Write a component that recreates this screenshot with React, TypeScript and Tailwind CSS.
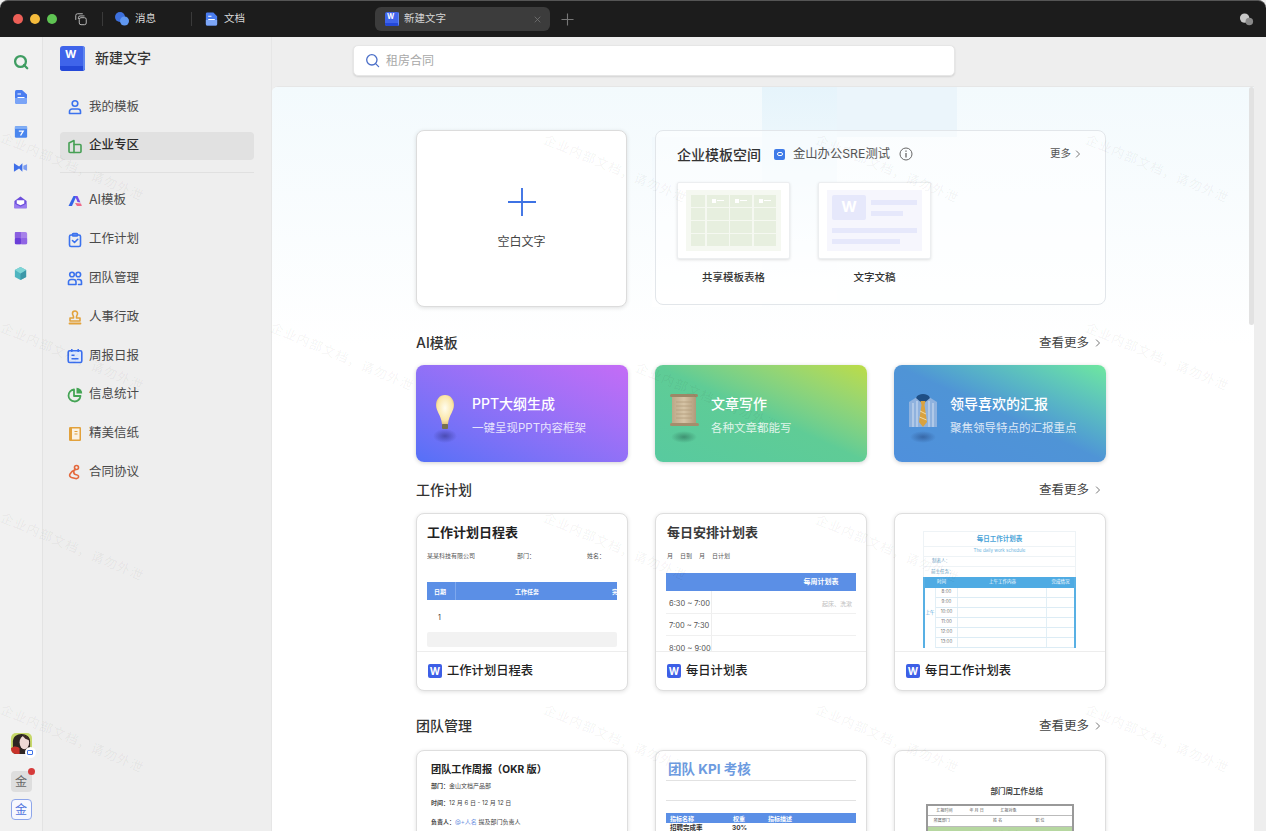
import React from "react";

const FONT = "font-['Inter','Noto_Sans_CJK_SC','Noto_Sans',sans-serif]";

function WordIcon({ box, text }: { box: string; text: string }) {
  return (
    <div className={`${box} relative overflow-hidden bg-[#3f64ea] text-white font-bold flex items-start justify-start`}>
      <span className={text}>W</span>
      <div className="absolute bottom-0 left-0 right-0 h-[18%] bg-[#2448d8]" />
      <div className="absolute top-0 bottom-0 right-0 w-[8%] bg-[#5f86ef]" />
    </div>
  );
}

function FooterWord() {
  return (
    <div className="w-[14px] h-[14px] rounded-[2px] bg-[#3d5fe6] text-white flex items-center justify-center text-[10px] font-bold leading-none shrink-0">W</div>
  );
}

const railIcons = [
  <svg key="s" viewBox="0 0 16 16" className="w-[16px] h-[16px]"><circle cx="7.5" cy="7.5" r="5.4" fill="none" stroke="#3f9d62" strokeWidth="2.3" /><path d="M11 11l3.2 3.2" stroke="#3f9d62" strokeWidth="2.3" strokeLinecap="round" /></svg>,
  <svg key="d" viewBox="0 0 16 16" className="w-[16px] h-[16px]"><path d="M2 2.5A1.5 1.5 0 0 1 3.5 1H9l5 4.5V13a2 2 0 0 1-2 2H4a2 2 0 0 1-2-2z" fill="#4a7df0" /><path d="M2 9h12v4a2 2 0 0 1-2 2H4a2 2 0 0 1-2-2z" fill="#7aa4f7" /><path d="M4.5 5h3.500M4.500 8.500h7" stroke="#fff" strokeWidth="1.2" /></svg>,
  <svg key="c" viewBox="0 0 16 16" className="w-[14px] h-[14px]"><rect x="1" y="1.5" width="14" height="13" rx="1.5" fill="#4a86ee" /><rect x="1" y="1.5" width="14" height="3" fill="#82aef5" /><path d="M5.5 7h5l-3 5" fill="none" stroke="#fff" strokeWidth="1.5" /></svg>,
  <svg key="v" viewBox="0 0 16 16" className="w-[15px] h-[15px]"><path d="M1 3.5l5.5 3.500L10 3.500v9L6.500 9 1 12.500z" fill="#3f6fe8" /><path d="M11 6.200L15 4.500v7l-4-1.700z" fill="#7d9df0" /></svg>,
  <svg key="m" viewBox="0 0 16 16" className="w-[15px] h-[15px]"><path d="M1.500 6.500L8 1.500l6.500 5V14H1.500z" fill="#6d4fdc" /><path d="M4 5.500h8v3.500L8 11 4 9z" fill="#fff" /><path d="M1.500 9L8 12.500 14.500 9v5h-13z" fill="#9a7df0" /></svg>,
  <svg key="q" viewBox="0 0 16 16" className="w-[14px] h-[14px]"><rect x="1" y="1" width="14" height="14" rx="2" fill="#a782ea" /><rect x="1" y="1" width="7" height="7" rx="1" fill="#8a5fe0" /><rect x="1" y="8" width="7" height="7" rx="1" fill="#6b3fd8" /><rect x="8" y="8" width="7" height="7" rx="1" fill="#9065e4" /></svg>,
  <svg key="b" viewBox="0 0 16 16" className="w-[15px] h-[15px]"><path d="M8 1l6 3.300v7.400L8 15l-6-3.300V4.300z" fill="#4fb5c0" /><path d="M8 8l6-3.700v7.400L8 15z" fill="#3b97a8" /><path d="M8 1l6 3.300L8 8 2 4.300z" fill="#7fd5d6" /></svg>,
];

const Stroke = ({ c, children }: { c: string; children: React.ReactNode }) => (
  <svg viewBox="0 0 16 16" className="w-[16px] h-[16px]" fill="none" stroke={c} strokeWidth="1.600" strokeLinecap="round" strokeLinejoin="round">{children}</svg>
);

const navTop = [
  { t: "我的模板", i: <Stroke c="#3b72ee"><circle cx="8" cy="4.500" r="2.800" /><path d="M2.500 14.500v-2a2.500 2.500 0 0 1 2.500-2.500h6a2.500 2.500 0 0 1 2.500 2.500v2z" /></Stroke> },
  { t: "企业专区", i: <Stroke c="#47a055"><path d="M2 5l5-2.500v12H3a1 1 0 0 1-1-1z" /><path d="M7 6.500h6a1 1 0 0 1 1 1v6a1 1 0 0 1-1 1H7" /></Stroke>, active: true },
];
const navRest = [
  { t: "AI模板", i: <svg viewBox="0 0 16 16" className="w-[16px] h-[16px]"><path d="M1.500 13L6.500 3h3L5 13z" fill="#3564e8" /><path d="M8 3h2.500l3 6.500-3-.5z" fill="#7a4ae8" /><path d="M8 10l6 .5.800 2.500H10z" fill="#ef6a8a" /></svg> },
  { t: "工作计划", i: <Stroke c="#3b72ee"><rect x="2.500" y="3" width="11" height="11.500" rx="1.500" /><rect x="5.500" y="1.500" width="5" height="2.500" rx=".8" /><path d="M5.500 8.500l2 2 3.200-3.200" /></Stroke> },
  { t: "团队管理", i: <Stroke c="#3b72ee"><circle cx="5" cy="4.500" r="2.300" /><circle cx="11.300" cy="4.500" r="2.300" /><path d="M1.500 14.500v-2.500a2.500 2.500 0 0 1 2.500-2.500h2.500a2.500 2.500 0 0 1 2.500 2.500v2.500z" /><path d="M10.500 9.500h1.500a2.500 2.500 0 0 1 2.500 2.500v2.500h-3" /></Stroke> },
  { t: "人事行政", i: <Stroke c="#e2a23c"><path d="M5.500 4.500a2.500 2.500 0 1 1 5 0c0 1.500-1 2-1 3.500v1h3.500v3H3V9h3.500V8c0-1.500-1-2-1-3.500z" /><path d="M2.500 14.500h11" strokeWidth="1.800" /></Stroke> },
  { t: "周报日报", i: <svg viewBox="0 0 16 16" className="w-[16px] h-[16px]"><rect x="1.200" y="2.800" width="13.600" height="11.700" rx="1.500" fill="#dfe8fc" stroke="#3b6fee" strokeWidth="1.600" /><path d="M4.800 1v3M11.200 1v3" stroke="#3b6fee" strokeWidth="1.500" /><path d="M4.500 7.200h3M4.500 10.800h7" stroke="#3b6fee" strokeWidth="1.400" /></svg> },
  { t: "信息统计", i: <svg viewBox="0 0 16 16" className="w-[16px] h-[16px]" fill="none"><path d="M7 2.500a6 6 0 1 0 6.500 6.500H7z" stroke="#45a455" strokeWidth="1.800" strokeLinejoin="round" /><path d="M9.500.8a5.500 5.500 0 0 1 5.700 5.700H9.500z" fill="#45a455" /></svg> },
  { t: "精美信纸", i: <svg viewBox="0 0 16 16" className="w-[16px] h-[16px]"><rect x="2" y="1" width="12" height="14" rx="1.200" fill="#e2a13b" /><rect x="5" y="2.500" width="7.500" height="11" fill="#fbf3e3" /><path d="M7.500 5.500h3M7.500 8h3" stroke="#e2a13b" strokeWidth="1.200" /></svg> },
  { t: "合同协议", i: <Stroke c="#e4683c"><circle cx="9.500" cy="3.500" r="2" /><path d="M8.500 5.500L5 7.500 3 10c-1 1.500 0 3 1.500 3.500l4 1c2 .5 3.500-1 3-2.500-.5-1.300-2-1.200-3-1.500-1.500-.5-2-1.500-1.500-3" /></Stroke> },
];

function NavItem({ t, i, active }: { t: string; i: React.ReactNode; active?: boolean }) {
  return (
    <div className="h-[38.800px] flex items-center">
      <div className={`h-[28px] w-full flex items-center pl-[6px] rounded-[4px] ${active ? "bg-[#e1e1e1] text-[#2b2b2b] font-medium" : "text-[#4a4a4a]"}`}>
        <div className="w-[17px] flex justify-center shrink-0">{i}</div>
        <span className="ml-[6px] text-[12.500px]">{t}</span>
      </div>
    </div>
  );
}

function Chevron() {
  return <svg viewBox="0 0 8 12" className="w-[6px] h-[10px]" fill="none" stroke="#666" strokeWidth="1.200"><path d="M1.500 1.500L6 6l-4.500 4.500" /></svg>;
}

function SectionHead({ title, mt }: { title: string; mt: string }) {
  return (
    <div className={`flex items-center justify-between h-[20px] ${mt}`}>
      <span className="text-[14px] font-medium text-[#333]">{title}</span>
      <span className="flex items-center gap-[6px] text-[12.500px] text-[#444] pr-[5px] pt-[2px]">查看更多 <Chevron /></span>
    </div>
  );
}

function GradCard({ cls, title, sub, art }: { cls: string; title: string; sub: string; art: React.ReactNode }) {
  return (
    <div className={`w-[212px] h-[97px] rounded-[8px] flex items-center pl-[2px] shadow-[0_1px_4px_rgba(0,0,0,0.18)] ${cls}`}>
      <div className="w-[54px] flex justify-center shrink-0">{art}</div>
      <div className="text-white mt-[2px]">
        <div className="text-[14px] font-medium leading-[20px]">{title}</div>
        <div className="text-[11.500px] opacity-80 mt-[6px] leading-[16px] whitespace-nowrap">{sub}</div>
      </div>
    </div>
  );
}

const Bulb = (
  <svg viewBox="0 0 24 52" className="w-[24px] h-[52px] mt-[10px]">
    <defs>
      <radialGradient id="bulb" cx="50%" cy="45%" r="60%"><stop offset="0" stopColor="#fffdf0" /><stop offset="0.7" stopColor="#fbe7a8" /><stop offset="1" stopColor="#d9b978" /></radialGradient>
      <radialGradient id="shade" cx="50%" cy="50%" r="50%"><stop offset="0" stopColor="rgba(20,20,80,0.4)" /><stop offset="1" stopColor="rgba(20,20,80,0)" /></radialGradient>
    </defs>
    <ellipse cx="12" cy="43" rx="12" ry="7" fill="url(#shade)" />
    <path d="M12 2c6 0 9 5 9 10 0 6-5 10-6 19H9C8 22 3 18 3 12 3 7 6 2 12 2z" fill="url(#bulb)" />
    <rect x="9" y="31" width="6" height="5" rx="1" fill="#77704f" />
  </svg>
);
const ScrollArt = (
  <svg viewBox="0 0 30 52" className="w-[30px] h-[52px] mt-[10px]">
    <defs>
      <linearGradient id="pap" x1="0" x2="1"><stop offset="0" stopColor="#bba888" /><stop offset="0.5" stopColor="#d6c4a6" /><stop offset="1" stopColor="#b09a7a" /></linearGradient>
      <radialGradient id="shade2" cx="50%" cy="50%" r="50%"><stop offset="0" stopColor="rgba(20,60,50,0.4)" /><stop offset="1" stopColor="rgba(20,60,50,0)" /></radialGradient>
    </defs>
    <ellipse cx="15" cy="44" rx="13" ry="6" fill="url(#shade2)" />
    <rect x="3" y="2" width="24" height="30" fill="url(#pap)" />
    <rect x="1" y="1" width="28" height="3" rx="1.500" fill="#9c8767" />
    <rect x="1" y="30" width="29" height="3" rx="1.500" fill="#a48e6c" />
    <path d="M7 9h16M7 13h16M7 17h16M7 21h16M7 25h16" stroke="#b39d7b" strokeWidth=".8" />
  </svg>
);
const Shirt = (
  <svg viewBox="0 0 30 52" className="w-[30px] h-[52px] mt-[10px]">
    <defs>
      <radialGradient id="shade3" cx="50%" cy="50%" r="50%"><stop offset="0" stopColor="rgba(20,40,90,0.4)" /><stop offset="1" stopColor="rgba(20,40,90,0)" /></radialGradient>
    </defs>
    <ellipse cx="15" cy="44" rx="13" ry="6" fill="url(#shade3)" />
    <path d="M1 9l8-5h12l8 5v25H1z" fill="#8fb2de" />
    <path d="M5 10v24M9 8v26M21 8v26M25 10v24" stroke="#c7d9ee" strokeWidth="1.200" />
    <path d="M8 5c1-3 4-4 7-4s6 1 7 4l-7 6z" fill="#1f4f85" />
    <path d="M12.500 8h5l-1 4 2.500 17-4 5-4-5 2.500-17z" fill="#d9a23f" />
    <path d="M12 18l6 3M11.500 24l7 3" stroke="#f0dba8" strokeWidth="1" />
  </svg>
);

function TplCard({ name, children }: { name?: string; children: React.ReactNode }) {
  return (
    <div className="w-[212px] h-[178px] rounded-[8px] bg-white border border-[#dedede] shadow-[0_1px_4px_rgba(0,0,0,0.12)] flex flex-col overflow-hidden">
      <div className="h-[137px] overflow-hidden shrink-0">{children}</div>
      {name && (
        <div className="flex-1 border-t border-[#ededed] flex items-center pl-[11px] gap-[5px]">
          <FooterWord />
          <span className="text-[12.300px] text-[#222] font-medium">{name}</span>
        </div>
      )}
    </div>
  );
}

function Plan1() {
  return (
    <div className="pl-[10px] pr-[10px] pt-[8px] text-[#333]">
      <div className="text-[13px] font-bold leading-[20px] text-[#222]">工作计划日程表</div>
      <div className="flex text-[6px] mt-[9px] leading-[10px] text-[#555]">
        <span className="w-[90px]">某某科技有限公司</span><span className="w-[70px]">部门：</span><span>姓名：</span>
      </div>
      <div className="mt-[21px] h-[18px] bg-[#5b8fe6] text-white text-[6px] font-bold flex items-center">
        <span className="w-[29px] pl-[7px] border-r border-[#7ea8ee] h-full flex items-center">日期</span>
        <span className="flex-1 text-center pr-[14px]">工作任务</span>
        <span className="w-[5px] overflow-hidden">完</span>
      </div>
      <div className="h-[32px] flex items-center pl-[11px] pt-[4px] text-[7px]">1</div>
      <div className="h-[15px] bg-[#f2f2f2] rounded-[2px]" />
    </div>
  );
}

function Plan2() {
  return (
    <div className="pl-[10px] pr-[10px] pt-[8px] text-[#333]">
      <div className="text-[13px] font-bold leading-[20px] text-[#3a3a3a] pl-[1px]">每日安排计划表</div>
      <div className="flex gap-[7px] text-[6px] mt-[9px] leading-[10px] text-[#555] pl-[1px]">
        <span>月</span><span>日到</span><span>月</span><span>日计划</span>
      </div>
      <div className="mt-[12px] h-[18px] bg-[#5b8fe6] text-white text-[7px] font-bold flex items-center justify-center pl-[120px] whitespace-nowrap">每周计划表</div>
      <div className="text-[7.500px] text-[#555]">
        {[["6:30 ~ 7:00", "起床、洗漱"], ["7:00 ~ 7:30", ""], ["8:00 ~ 9:00", ""]].map(([a, b], k) => (
          <div key={k} className="h-[22.500px] flex items-center border-b border-[#f0f0f0]">
            <span className="w-[46px] pl-[3px] pt-[3px] h-full flex items-center border-r border-[#eee] whitespace-nowrap">{a}</span>
            <span className="flex-1 text-right pr-[4px] pt-[3px] text-[6px] text-[#c0c0c0]">{b}</span>
          </div>
        ))}
      </div>
    </div>
  );
}

function Plan3() {
  const rows = ["8:00", "9:00", "10:00", "11:00", "12:00", "13:00"];
  return (
    <div className="pl-[28px] pr-[29px] pt-[17px]">
      <div className="border-x border-t border-[#eef3f6]">
        <div className="h-[14px] flex items-center justify-center text-[6.500px] font-bold text-[#4aa4d8] pt-[2px]">每日工作计划表</div>
        <div className="h-[10px] border-t border-[#eef3f6] flex items-center justify-center text-[4.500px] text-[#6cb4de]">The daily work schedule</div>
        <div className="h-[10px] border-t border-[#eef3f6] flex items-center pl-[8px] text-[4.500px] text-[#6a9cc0]">制表人：</div>
        <div className="h-[11px] border-t border-[#eef3f6] flex items-center pl-[7px] text-[4.500px] text-[#6a9cc0]">前主任务：</div>
      </div>
      <div className="border-x-2 border-[#58b0e4]">
        <div className="h-[11px] bg-[#4fabe3] text-white text-[4.500px] flex items-center">
          <span className="w-[33px] text-center">时间</span>
          <span className="flex-1 text-center">上午工作内容</span>
          <span className="w-[27px] text-center">完成情况</span>
        </div>
        <div className="flex">
          <div className="w-[11px] text-[4.500px] text-[#4aa4d8] flex items-start pt-[22px] justify-center border-r border-[#e2eff6]">上午</div>
          <div className="flex-1">
            {rows.map((r) => (
              <div key={r} className="h-[10px] flex items-center border-b border-[#dcecf5] text-[4.500px] text-[#777]">
                <span className="w-[22px] text-center border-r border-[#e2eff6] h-full flex items-center justify-center">{r}</span>
                <span className="flex-1 h-full border-r border-[#e2eff6]" />
                <span className="w-[27px]" />
              </div>
            ))}
          </div>
        </div>
      </div>
    </div>
  );
}

function Team1() {
  return (
    <div className="pl-[14px] pt-[9px] text-[#444]">
      <div className="text-[10.200px] font-bold leading-[18px] text-[#222]">团队工作周报（OKR 版）</div>
      <div className="text-[6px] mt-[3px] leading-[10px]"><b>部门：</b>金山文档产品部</div>
      <div className="text-[6px] mt-[7px] leading-[10px]"><b>时间：</b>12 月 6 日 - 12 月 12 日</div>
      <div className="text-[6px] mt-[9px] leading-[10px]"><b>负责人：</b><span className="text-[#6f93df]">@+人名</span> 提及部门负责人</div>
    </div>
  );
}

function Team2() {
  return (
    <div className="px-[10px] pt-[8px]">
      <div className="text-[13.500px] font-bold leading-[20px] text-[#6d9be0] pl-[2px]">团队 KPI 考核</div>
      <div className="h-[1px] bg-[#e2e2e2] mt-[1px]" />
      <div className="h-[1px] bg-[#e2e2e2] mt-[19px]" />
      <div className="mt-[12px] h-[10px] bg-[#5b8fe6] text-white text-[6px] font-bold flex items-center">
        <span className="w-[50px] pl-[4px]">指标名称</span><span className="w-[37px] pl-[17px]">权重</span><span className="pl-[15px]">指标描述</span>
      </div>
      <div className="text-[6.500px] font-bold text-[#333] flex h-[11px] items-center">
        <span className="w-[50px] pl-[4px]">招聘完成率</span><span className="pl-[16px]">30%</span>
      </div>
    </div>
  );
}

function Team3() {
  return (
    <div className="pl-[31px] pr-[31px] pt-[35px]">
      <div className="text-[7.500px] font-bold text-[#444] text-right pr-[31px] leading-[12px] whitespace-nowrap">部门周工作总结</div>
      <div className="mt-[6px] border-2 border-[#999] text-[4px] text-[#555]">
        <div className="h-[10px] border-b border-[#bbb] flex items-center justify-around"><span>汇报时间</span><span>年 月 日</span><span>汇报对象</span><span className="w-[30px]" /></div>
        <div className="h-[11px] border-b border-[#bbb] flex items-center justify-around"><span>所属部门</span><span className="w-[20px]" /><span>姓 名</span><span className="w-[10px]" /><span>职 位</span><span className="w-[10px]" /></div>
        <div className="h-[14px] bg-[#b6d7a0] flex items-center justify-center tracking-[3px]">上周工作总结</div>
      </div>
    </div>
  );
}

function Watermarks() {
  const spots = [
    [5, 128], [548, 130], [820, 130], [1090, 130],
    [5, 318], [275, 318], [640, 358], [1090, 318],
    [5, 508], [548, 508], [820, 510],
    [5, 700], [548, 700], [820, 700], [1090, 700],
  ];
  return (
    <div className="absolute inset-0 overflow-hidden pointer-events-none">
      {spots.map(([x, y]) => (
        <div
          key={`${x}-${y}`}
          className="absolute origin-top-left rotate-[23deg] text-[13px] text-[rgba(0,0,0,0.055)] whitespace-nowrap tracking-[1px]"
          style={{ left: x, top: y }}
        >
          企业内部文档，请勿外泄
        </div>
      ))}
    </div>
  );
}

function SheetThumb() {
  return (
    <div className="w-[113px] h-[77px] bg-white rounded-[2px] border border-[#eceef0] shadow-[0_1px_3px_rgba(0,0,0,0.12)] p-[7px_8px]">
      <div className="h-full bg-[#f5f8f1] p-[5px] grid grid-cols-[14px_1fr_1fr_1fr] grid-rows-4 gap-[1.500px]">
        {Array.from({ length: 16 }).map((_, k) => (
          <div key={k} className="bg-[#e7efdf] flex items-center justify-center gap-[1px]">
            {k > 0 && k < 4 && <><span className="w-[4px] h-[4px] bg-white" /><span className="w-[7px] h-[1px] bg-white" /></>}
          </div>
        ))}
      </div>
    </div>
  );
}

function DocThumb() {
  return (
    <div className="w-[113px] h-[77px] bg-white rounded-[2px] border border-[#eceef0] shadow-[0_1px_3px_rgba(0,0,0,0.12)] p-[7px_8px]">
      <div className="h-full bg-[#f6f6fd] px-[5px] pt-[5px]">
        <div className="flex gap-[5px]">
          <div className="w-[34px] h-[25px] rounded-[2px] bg-[#e6e8fb] text-white font-bold text-[15px] flex items-center justify-center">W</div>
          <div className="flex-1 pt-[5px]">
            <div className="h-[5px] bg-[#e6e8fb]" />
            <div className="h-[5px] w-[32px] mt-[6px] bg-[#e6e8fb]" />
          </div>
        </div>
        <div className="h-[5px] mt-[8px] bg-[#e6e8fb]" />
        <div className="h-[5px] w-[68px] mt-[6px] bg-[#e6e8fb]" />
      </div>
    </div>
  );
}

export default function App() {
  return (
    <div className={`relative w-[1266px] h-[831px] overflow-hidden bg-[#eeeeee] flex flex-col ${FONT}`}>
      {/* title bar */}
      <div className="h-[37px] bg-[#1c1c1c] rounded-t-[8px] border-t border-[#555] flex items-center shrink-0 relative">
        <div className="flex items-center gap-[7px] pl-[13px]">
          <span className="w-[10px] h-[10px] rounded-full bg-[#ec5f57]" />
          <span className="w-[10px] h-[10px] rounded-full bg-[#f4bb3c]" />
          <span className="w-[10px] h-[10px] rounded-full bg-[#5fc453]" />
        </div>
        <svg viewBox="0 0 16 16" className="w-[14px] h-[14px] ml-[17px]" fill="none" stroke="#bbb" strokeWidth="1.100"><path d="M10 2H4a2 2 0 0 0-2 2v5" /><path d="M12 4.500H7a2 2 0 0 0-2 2V8" /><rect x="6" y="6.500" width="8" height="8" rx="2" /></svg>
        <div className="w-px h-[14px] bg-[#3a3a3a] ml-[14px]" />
        <svg viewBox="0 0 16 16" className="w-[16px] h-[16px] ml-[11px]"><circle cx="6" cy="6" r="5" fill="#3d70dd" /><circle cx="10.500" cy="10" r="4.500" fill="#5f97f0" /></svg>
        <span className="ml-[5px] text-[10.500px] text-[#d8d8d8]">消息</span>
        <div className="w-px h-[14px] bg-[#3a3a3a] ml-[35px]" />
        <svg viewBox="0 0 16 16" className="w-[15px] h-[16px] ml-[12px]"><path d="M2 2.500A1.500 1.500 0 0 1 3.500 1H10l4 4v8.500a1.500 1.500 0 0 1-1.500 1.500h-9A1.500 1.500 0 0 1 2 13.500z" fill="#4a7df0" /><path d="M2 9h12v4.500a1.500 1.500 0 0 1-1.500 1.500h-9A1.500 1.500 0 0 1 2 13.500z" fill="#7da6f6" /><path d="M4.500 5h3.500M4.500 8.500h7" stroke="#fff" strokeWidth="1.200" /></svg>
        <span className="ml-[5px] text-[10.500px] text-[#d8d8d8]">文档</span>
        <div className="ml-[130px] w-[175px] h-[24px] bg-[#3c3c3c] rounded-[6px] flex items-center pl-[10px] pr-[9px]">
          <WordIcon box="w-[14px] h-[14px] rounded-[2px]" text="text-[7px] leading-[9px] ml-[2px]" />
          <span className="ml-[5px] text-[10.500px] text-[#d4d4d4]">新建文字</span>
          <svg viewBox="0 0 10 10" className="w-[7px] h-[7px] ml-auto" stroke="#777" strokeWidth="1.100"><path d="M1 1l8 8M9 1l-8 8" /></svg>
        </div>
        <svg viewBox="0 0 14 14" className="w-[13px] h-[13px] ml-[11px]" stroke="#777" strokeWidth="1.200"><path d="M7 .5v13M.5 7h13" /></svg>
        <svg viewBox="0 0 16 16" className="w-[15px] h-[15px] ml-auto mr-[12px]"><circle cx="6" cy="6.500" r="5" fill="#c9c9c9" /><circle cx="11" cy="10" r="4" fill="#8a8a8a" /></svg>
      </div>

      <div className="flex-1 flex min-h-0">
        {/* rail */}
        <div className="w-[43px] shrink-0 bg-[#f1f1f1] border-r border-[#e3e3e3] flex flex-col items-center pt-[7px] pb-[11px]">
          {railIcons.map((ic, k) => (
            <div key={k} className="h-[35.300px] w-full flex items-center justify-center pr-[1px]">{ic}</div>
          ))}
          <div className="mt-auto relative w-[21px] h-[21px]">
            <svg viewBox="0 0 22 22" className="w-[21px] h-[21px] rounded-[5px]"><rect width="22" height="22" fill="#c7d86a" /><path d="M2 22V9c0-5 4-8 9-8s9 3 9 8v13z" fill="#2e2522" /><ellipse cx="14" cy="10" rx="5" ry="7" fill="#eed9d6" /><path d="M12 3c3-1 7 1 8 5l-5-2z" fill="#3b2a26" /><path d="M0 16c3-3 7-2 9 0v6H0z" fill="#c8322b" /></svg>
            <div className="absolute -right-[4px] -bottom-[4px] w-[11px] h-[11px] rounded-full bg-white flex items-center justify-center">
              <span className="w-[6px] h-[5px] border border-[#3f72e8] rounded-[1px]" />
            </div>
          </div>
          <div className="relative mt-[17px] w-[21px] h-[21px] rounded-[4px] bg-[#dedede] flex items-center justify-center text-[12px] text-[#666]">
            金
            <span className="absolute -top-[3px] -right-[3px] w-[7px] h-[7px] rounded-full bg-[#d63b3b]" />
          </div>
          <div className="mt-[7px] w-[21px] h-[21px] rounded-[4px] border border-[#8ea6ea] bg-[#f7f8fe] flex items-center justify-center text-[12px] text-[#4f72dd]">金</div>
        </div>

        {/* sidebar */}
        <div className="w-[229px] shrink-0 pl-[17px] pr-[17px] pt-[8px] border-r border-[#e6e6e6]">
          <div className="flex items-center h-[26px]">
            <WordIcon box="w-[25px] h-[25px] rounded-[3px]" text="text-[11px] leading-[14px] ml-[5px] mt-[1px]" />
            <span className="ml-[10px] text-[14px] font-medium text-[#333] -mt-[1px]">新建文字</span>
          </div>
          <div className="mt-[16.600px]">
            {navTop.map((n) => <NavItem key={n.t} {...n} />)}
          </div>
          <div className="h-px bg-[#e0e0e0] mt-[7px] mb-[8.200px]" />
          {navRest.map((n) => <NavItem key={n.t} {...n} />)}
        </div>

        {/* main column */}
        <div className="flex-1 min-w-0 flex flex-col">
          <div className="h-[49px] shrink-0 pt-[8px] pl-[81px]">
            <div className="w-[602px] h-[31px] bg-white rounded-[5px] border border-[#e6e6e6] shadow-[0_1px_2px_rgba(0,0,0,0.12)] flex items-center pl-[11px]">
              <svg viewBox="0 0 16 16" className="w-[15px] h-[15px]" fill="none" stroke="#4b6fc8" strokeWidth="1.400"><circle cx="7.300" cy="7.300" r="5.500" /><path d="M11.300 11.300l3.200 3.200" strokeLinecap="round" /></svg>
              <span className="ml-[6px] text-[12px] text-[#a8a8a8]">租房合同</span>
            </div>
          </div>

          <div className="flex-1 min-h-0 flex pr-[12px]">
            <div className="relative flex-1 min-w-0 bg-white rounded-tl-[6px] border-t border-[#e6e6e6] overflow-hidden pl-[144px] pt-[43px]">
              {/* background wash */}
              <div className="absolute left-0 right-0 top-0 h-[260px] bg-gradient-to-b from-[#f3fafd] to-[#ffffff]" />
              <div className="absolute left-[490px] top-0 w-[75px] h-[215px] bg-gradient-to-b from-[#e6f4fb] to-[#ffffff]" />
              <div className="absolute left-[565px] top-0 w-[120px] h-[50px] bg-[#ebf5fb]" />
              <div className="absolute left-[380px] top-[50px] w-[110px] h-[170px] bg-gradient-to-b from-[#f2f9fd] to-[#ffffff]" />

              <div className="relative w-[690px]">
                <div className="flex gap-[28px]">
                  <div className="w-[211px] h-[177px] rounded-[8px] bg-white border border-[#dcdcdc] shadow-[0_1px_4px_rgba(0,0,0,0.12)] flex flex-col items-center">
                    <svg viewBox="0 0 28 28" className="w-[28px] h-[28px] mt-[57px]" stroke="#3d72e4" strokeWidth="1.900"><path d="M14 0v28M0 14h28" /></svg>
                    <span className="mt-[17px] text-[12px] text-[#444]">空白文字</span>
                  </div>
                  <div className="w-[451px] h-[175px] rounded-[8px] border border-[#e2e6ea] bg-white/50 px-[21px] pt-[13px]">
                    <div className="flex items-center h-[20px]">
                      <span className="text-[14px] font-medium text-[#333]">企业模板空间</span>
                      <span className="ml-[13px] w-[11px] h-[11px] rounded-[2px] bg-[#3f7be8] flex items-center justify-center"><span className="w-[6px] h-[4px] rounded-full border border-white" /></span>
                      <span className="ml-[8px] text-[12.300px] text-[#555]">金山办公SRE测试</span>
                      <svg viewBox="0 0 14 14" className="w-[14px] h-[14px] ml-[9px]" fill="none" stroke="#666" strokeWidth="1"><circle cx="7" cy="7" r="6" /><path d="M7 6v4.500" strokeWidth="1.300" /><path d="M7 3.500v1.300" strokeWidth="1.300" /></svg>
                      <span className="ml-auto flex items-center gap-[4px] text-[10.500px] text-[#555] pr-[3px]">更多 <Chevron /></span>
                    </div>
                    <div className="flex gap-[28px] mt-[18px]">
                      <div className="w-[113px]">
                        <SheetThumb />
                        <div className="text-center text-[10.500px] font-medium text-[#333] mt-[11px]">共享模板表格</div>
                      </div>
                      <div className="w-[113px]">
                        <DocThumb />
                        <div className="text-center text-[10.500px] font-medium text-[#333] mt-[11px]">文字文稿</div>
                      </div>
                    </div>
                  </div>
                </div>

                <SectionHead title="AI模板" mt="mt-[25px]" />
                <div className="flex justify-between mt-[13px]">
                  <GradCard cls="bg-gradient-to-tr from-[#5470f7] to-[#c46cf6]" title="PPT大纲生成" sub="一键呈现PPT内容框架" art={Bulb} />
                  <GradCard cls="bg-gradient-to-tr from-[#58ca9f] via-[#5fcc96] to-[#bcdc44]" title="文章写作" sub="各种文章都能写" art={ScrollArt} />
                  <GradCard cls="bg-gradient-to-tr from-[#4f90dc] via-[#4f94d6] to-[#6fe79e]" title="领导喜欢的汇报" sub="聚焦领导特点的汇报重点" art={Shirt} />
                </div>

                <SectionHead title="工作计划" mt="mt-[17px]" />
                <div className="flex justify-between mt-[14px]">
                  <TplCard name="工作计划日程表"><Plan1 /></TplCard>
                  <TplCard name="每日计划表"><Plan2 /></TplCard>
                  <TplCard name="每日工作计划表"><Plan3 /></TplCard>
                </div>

                <SectionHead title="团队管理" mt="mt-[24px]" />
                <div className="flex justify-between mt-[15px]">
                  <TplCard><Team1 /></TplCard>
                  <TplCard><Team2 /></TplCard>
                  <TplCard><Team3 /></TplCard>
                </div>
              </div>
              {/* scrollbar thumb */}
              <div className="absolute right-0 top-0 w-[5px] h-[238px] bg-[#e2e2e2] rounded-[3px]" />
            </div>
          </div>
        </div>
      </div>
      <Watermarks />
    </div>
  );
}
